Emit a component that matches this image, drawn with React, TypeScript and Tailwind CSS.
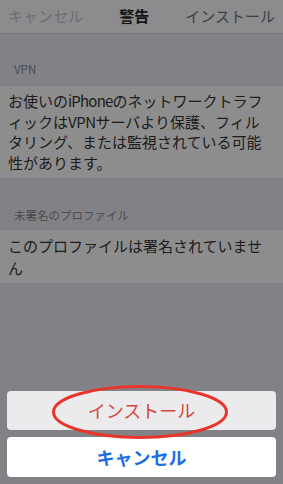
export default function App() {
	return (
		<div
			className="relative flex h-[484px] w-[283px] flex-col overflow-hidden bg-[#828286]"
			style={{ fontFamily: '"Noto Sans CJK JP", "Noto Sans", sans-serif' }}
		>
			{/* Nav bar */}
			<div className="flex h-[34px] items-center justify-between border-b border-[#77777b] bg-[#8c8c8e] px-[8px] text-[15px]">
				<span className="text-[#6c6c6e]">キャンセル</span>
				<span className="font-bold text-[#141414]">警告</span>
				<span className="text-[#3f3f41]">インストール</span>
			</div>

			{/* VPN */}
			<div className="px-[14px] pt-[27px] pb-[8px] text-[11.5px] leading-[16px] text-[#4b4b4f]">VPN</div>
			<div className="border-y border-[#7e7e80] bg-[#8d8d8d] px-[8px] py-[5px] text-[15px] leading-[20.5px] whitespace-nowrap text-[#1c1c1c]">
				お使いの<span className="tracking-[-0.8px]">iPhone</span>のネットワークトラフ
				<br />
				ィックは<span className="tracking-[-0.5px]">VPN</span>サーバより保護、フィル
				<br />
				タリング、または監視されている可能
				<br />
				性があります。
			</div>

			{/* Unsigned profile */}
			<div className="px-[14px] pt-[28px] pb-[6px] text-[11.5px] leading-[16px] text-[#4b4b4f]">未署名のプロファイル</div>
			<div className="border-y border-[#7e7e80] bg-[#8d8d8d] px-[8px] pt-[5px] pb-[4px] text-[15px] leading-[22px] whitespace-nowrap text-[#1c1c1c]">
				このプロファイルは署名されていませ
				<br />
				ん
			</div>

			{/* Action sheet */}
			<div className="mt-auto flex flex-col gap-[7px] px-[7px] pb-[7px]">
				<div className="flex h-[39px] items-center justify-center rounded-[4px] bg-[#ebebed] text-[18px] text-[#d8463a]">
					インストール
				</div>
				<div className="flex h-[40px] items-center justify-center rounded-[4px] bg-white text-[18px] font-bold text-[#1a6ee6]">
					キャンセル
				</div>
			</div>

			{/* red highlight ring */}
			<svg className="absolute left-[50px] top-[383px]" width="180" height="58" viewBox="0 0 180 58">
				<ellipse cx="90" cy="29" rx="86.5" ry="25.5" fill="none" stroke="#e8352c" strokeWidth="3" />
			</svg>
		</div>
	)
}
